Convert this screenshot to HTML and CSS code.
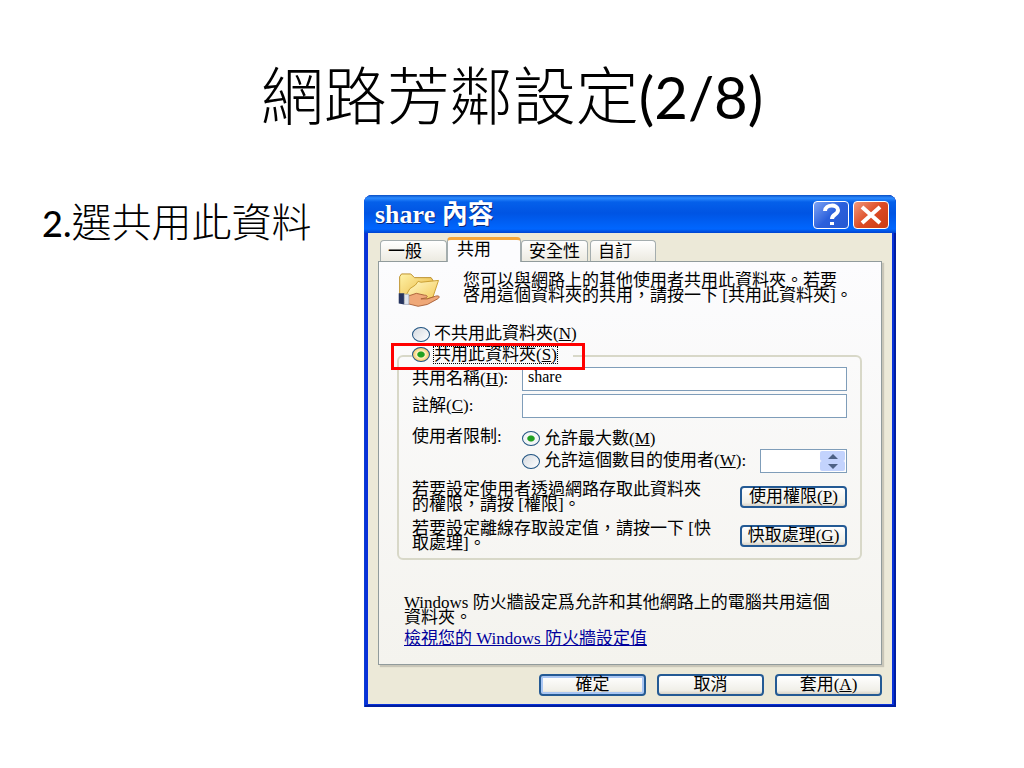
FILE: index.html
```html
<!DOCTYPE html>
<html lang="zh-TW">
<head>
  <meta charset="UTF-8">
  <meta name="viewport" content="width=device-width, initial-scale=1.0">
  <title>網路芳鄰設定(2/8)</title>
  <link rel="stylesheet" href="styles.css">
</head>
<body>
  <main class="slide">
    <h1>網路芳鄰設定<span class="latin">(2/8)</span></h1>
    <div class="content">
      <p class="step"><span class="num">2.</span>選共用此資料</p>

      <section class="dialog">
        <header class="titlebar">
          <h2>share 內容</h2>
          <button type="button" class="title-btn help" aria-label="說明">
            <svg viewBox="0 0 34 26"><path d="M11 9c0-7 13-7 13-1 0 5-6 4-6 9" /><path d="M18 20v3" /></svg>
          </button>
          <button type="button" class="title-btn close" aria-label="關閉">
            <svg viewBox="0 0 34 26"><path d="M8 5l18 16M26 5L8 21" /></svg>
          </button>
        </header>

        <div class="dialog-body">
          <nav class="tabs">
            <button type="button" class="tab">一般</button>
            <button type="button" class="tab active">共用</button>
            <button type="button" class="tab">安全性</button>
            <button type="button" class="tab">自訂</button>
          </nav>

          <form class="panel">
            <div class="intro">
              <svg class="folder" viewBox="0 0 46 40">
                <defs>
                  <linearGradient id="back" x2="1" y2="1"><stop stop-color="#fff3a8" /><stop offset="1" stop-color="#e6ae34" /></linearGradient>
                  <linearGradient id="front" x2="1" y2="1"><stop stop-color="#fffcd2" /><stop offset="1" stop-color="#f4c64c" /></linearGradient>
                </defs>
                <path d="M1 4l2-3h10l4 4h18l2 3v20l-7 4H3L1 29z" fill="url(#back)" stroke="#b98a22" />
                <path d="M18 13l3-4 3 1 19-2-6 18-24 7-8-4 7-12z" fill="url(#front)" stroke="#c79b2e" />
                <path d="M10 25l9-3 9 2c3 0 4 2 1 3l-5 1h7l9-3c4-1 5 1 2 3l-11 6-10 2-12-3z" fill="#efa878" stroke="#a85f37" />
                <path d="M0 22h6v12l-6-1z" fill="#26345f" />
                <path d="M6 23h5v11H6z" fill="#dfe5ef" stroke="#98a2b5" stroke-width=".7" />
              </svg>
              <p>您可以與網路上的其他使用者共用此資料夾。若要<br>啓用這個資料夾的共用，請按一下 [共用此資料夾]。</p>
            </div>

            <label class="option no-share"><input type="radio" name="share"><span>不共用此資料夾(<u>N</u>)</span></label>

            <fieldset class="group">
              <legend>
                <label class="option"><input type="radio" name="share" class="hot" checked><span class="focused">共用此資料夾(<u>S</u>)</span></label>
              </legend>
              <div class="field">
                <label for="share-name">共用名稱(<u>H</u>):</label>
                <input type="text" id="share-name" value="share">
              </div>
              <div class="field">
                <label for="comment">註解(<u>C</u>):</label>
                <input type="text" id="comment">
              </div>
              <div class="field limit">
                <span>使用者限制:</span>
                <div class="limit-options">
                  <label class="option"><input type="radio" name="limit" checked><span>允許最大數(<u>M</u>)</span></label>
                  <div class="count-row">
                    <label class="option"><input type="radio" name="limit"><span>允許這個數目的使用者(<u>W</u>):</span></label>
                    <div class="spinner">
                      <input type="text" aria-label="使用者數目">
                      <div class="arrows">
                        <button type="button" aria-label="增加"><svg viewBox="0 0 12 6"><path d="M6 0l6 6H0z" /></svg></button>
                        <button type="button" aria-label="減少"><svg viewBox="0 0 12 6"><path d="M6 6l6-6H0z" /></svg></button>
                      </div>
                    </div>
                  </div>
                </div>
              </div>
              <div class="action">
                <p>若要設定使用者透過網路存取此資料夾<br>的權限，請按 [權限]。</p>
                <button type="button" class="btn">使用權限(<u>P</u>)</button>
              </div>
              <div class="action">
                <p>若要設定離線存取設定值，請按一下 [快<br>取處理]。</p>
                <button type="button" class="btn">快取處理(<u>G</u>)</button>
              </div>
            </fieldset>

            <div class="firewall">
              <p>Windows 防火牆設定爲允許和其他網路上的電腦共用這個<br>資料夾。</p>
              <a href="#">檢視您的 Windows 防火牆設定值</a>
            </div>
          </form>

          <footer class="buttons">
            <button type="button" class="btn default">確定</button>
            <button type="button" class="btn">取消</button>
            <button type="button" class="btn">套用(<u>A</u>)</button>
          </footer>
        </div>
      </section>
    </div>
  </main>
</body>
</html>
```
FILE: styles.css
```css
* {
  box-sizing: border-box;
}
body {
  margin: 0;
  background: #fff;
  color: #000;
  font-family: "Liberation Serif", "Noto Sans CJK TC", serif;
}
p, h1, h2 {
  margin: 0;
}
button, input {
  font: inherit;
  color: inherit;
  margin: 0;
}
.slide {
  padding: 47px 128px 60px 42px;
}
h1 {
  margin-right: -86px;
  text-align: center;
  font: 300 63px/96px Lato, "Noto Sans CJK TC", sans-serif;
}
h1 .latin {
  font-size: 58px;
  font-weight: 400;
}
.content {
  display: grid;
  grid-template-columns: 322px minmax(0, 1fr);
  align-items: start;
  margin-top: 50px;
}
.step {
  font: 300 40px/54px Lato, "Noto Sans CJK TC", sans-serif;
  white-space: nowrap;
}
.step .num {
  font-size: 36px;
  font-weight: 500;
}

/* dialog window */
.dialog {
  background: #0831d9;
  border-radius: 8px 8px 0 0;
  padding: 0 4px 3px;
  box-shadow: inset 1px 0 #0b3fd0, inset -2px 0 #001ea0, inset 0 -2px #001ea0;
  font-size: 17px;
  line-height: 14px;
}
.dialog p {
  line-height: 15px;
}
.titlebar {
  display: flex;
  align-items: center;
  gap: 4px;
  height: 38px;
  margin: 0 -4px;
  padding: 2px 7px 0 11px;
  border-radius: 8px 8px 0 0;
  background: linear-gradient(#0a4fc4 0, #2b8bff 3px, #0560ea 7px, #0054e3 18px, #0062f8 30px, #0066ff 34px, #0043cf 100%);
}
.titlebar h2 {
  flex: 1;
  color: #fff;
  font-size: 26px;
  font-weight: 700;
  line-height: 32px;
  text-shadow: 1px 1px #0a2a80;
}
.title-btn {
  width: 36px;
  height: 28px;
  padding: 0;
  border: 1px solid #fff;
  border-radius: 4px;
  background: linear-gradient(135deg, #7da3f5, #2b60dc 50%, #2558d0);
}
.title-btn.close {
  background: linear-gradient(135deg, #f0997c, #dd4b25 50%, #c93c14);
}
.title-btn svg {
  display: block;
  width: 100%;
  height: 100%;
  fill: none;
  stroke: #fff;
  stroke-width: 4;
}
.dialog-body {
  padding: 4px 10px 8px;
  background: #ece9d8;
}

/* tabs */
.tabs {
  display: flex;
  align-items: flex-end;
  padding-left: 2px;
}
.tab {
  height: 21px;
  padding: 2px 7px 0;
  border: 1px solid #a4adae;
  border-bottom: 0;
  border-radius: 4px 4px 0 0;
  background: linear-gradient(#fff, #eceae1);
  white-space: nowrap;
}
.tab:first-child {
  padding-right: 24px;
}
.tab:last-child {
  margin-left: 2px;
  padding-right: 23px;
}
.tab.active {
  height: 25px;
  margin-bottom: -1px;
  padding: 0 29px 3px 9px;
  border-top: 3px solid #f5a63a;
  background: #fcfcfe;
}
.panel {
  padding: 11px 19px 18px 18px;
  border: 1px solid #919b9c;
  box-shadow: 2px 2px 1px #c9c6b8;
  background: linear-gradient(#fcfcfe, #f4f3ee);
  white-space: nowrap;
}
.intro {
  display: flex;
  gap: 20px;
}
.folder {
  width: 46px;
  height: 37px;
}
.option {
  display: inline-flex;
  align-items: center;
  gap: 4px;
}
.option input {
  appearance: none;
  width: 18px;
  height: 15px;
  border: 1px solid #1f5280;
  border-radius: 50%;
  background: linear-gradient(135deg, #d5dae0, #fff);
}
.option input:checked {
  background: radial-gradient(ellipse, #21a121 0 28%, #f2f5f5 38%);
}
.option input.hot:checked {
  background: radial-gradient(ellipse, #21a121 0 28%, #fff0c0 38%, #f0b43c 90%);
}
.no-share {
  margin: 16px 0 0 15px;
  height: 16px;
}
.group {
  margin: 3px 0 0;
  padding: 2px 13px 7px;
  border: 2px solid #d8d8c8;
  border-radius: 6px;
  min-width: 0;
}
.group legend {
  position: relative;
  padding: 0 16px 0 0;
  line-height: 16px;
}
/* red marker drawn over the chosen option */
.group legend::after {
  content: "";
  position: absolute;
  inset: -4px -12px -5px -21px;
  border: 3px solid #f00;
}
.focused {
  outline: 1px dotted #000;
}
.field {
  display: grid;
  grid-template-columns: 110px minmax(0, 1fr);
  align-items: center;
  margin-bottom: 3px;
}
.field > input,
.spinner {
  height: 24px;
  width: 100%;
  border: 1px solid #7f9db9;
  background: #fff;
}
.field > input {
  padding: 0 5px 4px;
  font-size: 16px;
}
.limit {
  align-items: start;
  margin: 12px 0 6px;
}
.limit-options > .option {
  display: flex;
  padding-top: 1px;
}
.count-row {
  display: flex;
  align-items: center;
  gap: 14px;
  margin-top: 3px;
}
.spinner {
  display: flex;
  flex: 1;
  min-width: 0;
  width: auto;
}
.spinner input {
  flex: 1;
  min-width: 0;
  padding: 0 4px;
  border: 0;
  background: none;
}
.arrows {
  display: grid;
  width: 27px;
  padding: 1px;
}
.arrows button {
  display: flex;
  align-items: center;
  justify-content: center;
  padding: 0;
  border: 0;
  border-radius: 2px;
  background: #c3d3fd;
}
.arrows svg {
  width: 12px;
  height: 5px;
  fill: #4d6185;
}
.action {
  display: flex;
  align-items: center;
  justify-content: space-between;
  margin-top: 9px;
}
.btn {
  width: 107px;
  height: 22px;
  padding: 0;
  border: 2px solid #245a94;
  border-radius: 4px;
  background: linear-gradient(#fff, #f0efe8 80%, #d8d3c8);
  line-height: 16px;
}
.btn.default {
  box-shadow: inset 0 0 0 2px #a9c6f3;
}
.firewall {
  padding: 35px 0 0 7px;
}
.firewall a {
  display: inline-block;
  margin-top: 7px;
  color: #00009c;
}
.buttons {
  display: flex;
  justify-content: flex-end;
  gap: 11px;
  padding-top: 9px;
}
```
